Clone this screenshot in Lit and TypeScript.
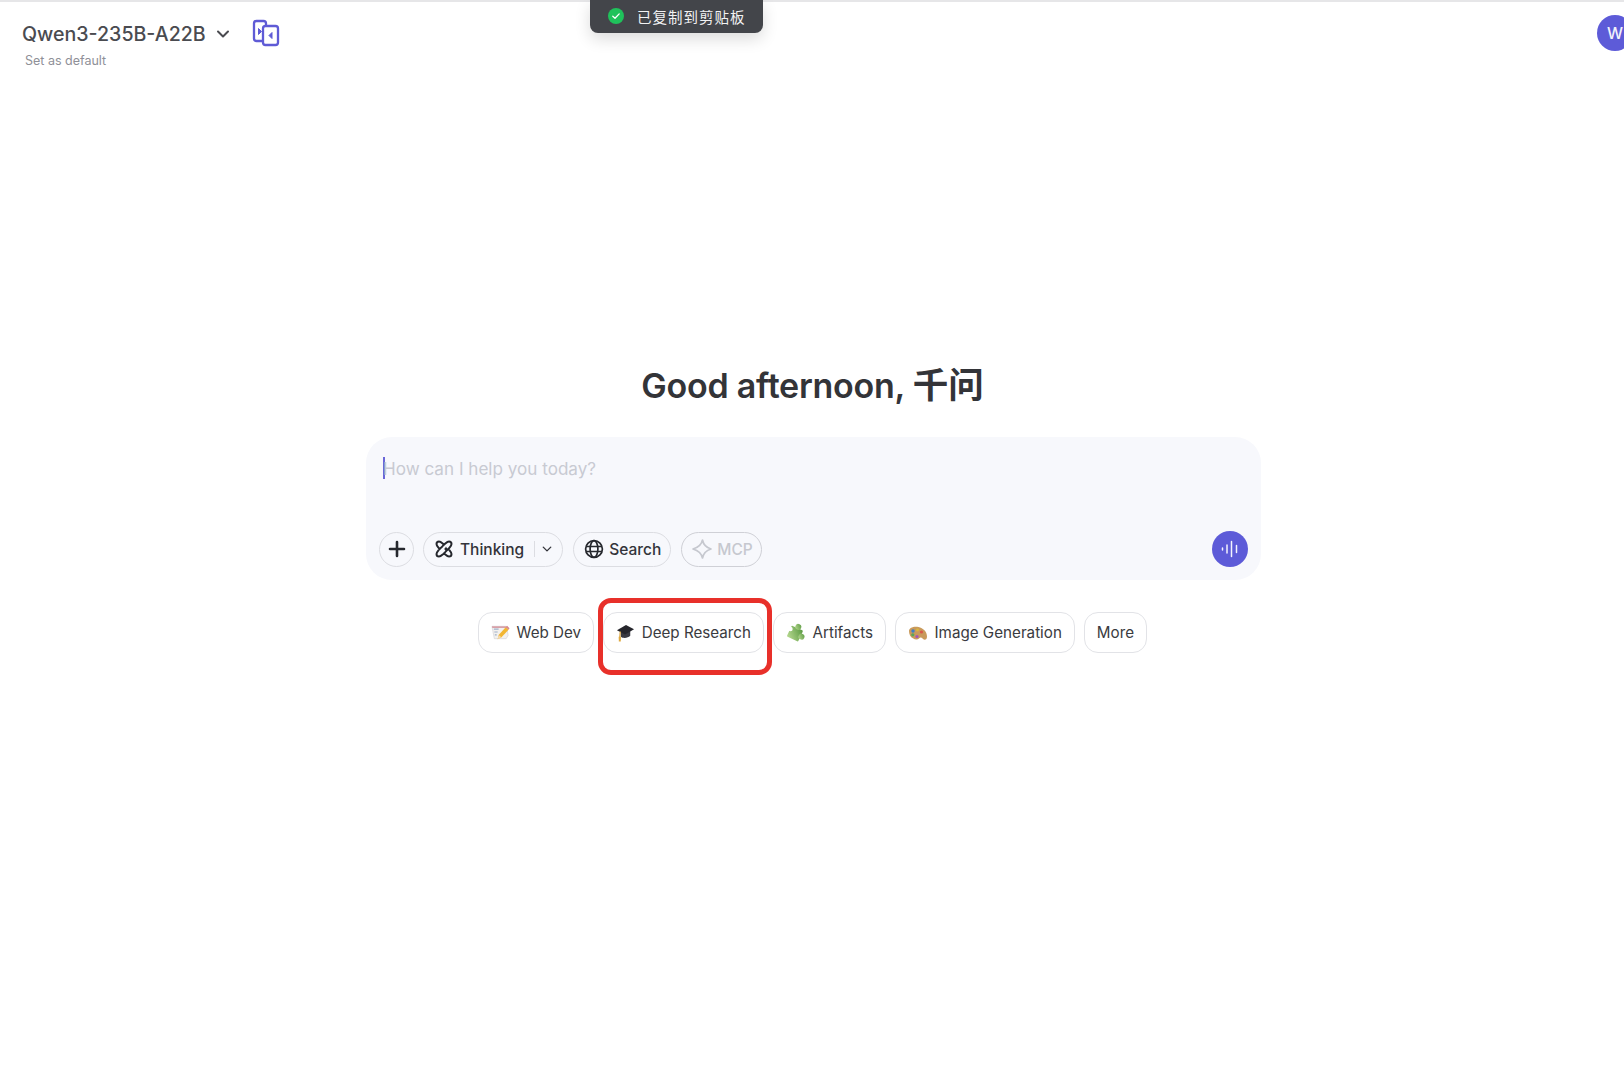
import { LitElement, html, css } from "lit";
import { customElement } from "lit/decorators.js";

const chevron = (size: number, sw: number) => html`<svg width=${size} height=${size} viewBox="0 0 16 16" fill="none" stroke="currentColor" stroke-width=${sw} stroke-linecap="round" stroke-linejoin="round"><path d="M3 5.500 8 10.500 13 5.500" /></svg>`;

const compareIcon = html`<svg width="28" height="28" viewBox="0 0 28 28" fill="none" stroke="#5f5bd6" stroke-width="2.300" stroke-linejoin="round">
  <path d="M10 22H4.500A2.500 2.500 0 0 1 2 19.500V4.500A2.500 2.500 0 0 1 4.500 2h7A2.500 2.500 0 0 1 14 4.500V7" />
  <rect x="11" y="7" width="15" height="19" rx="2.500" />
  <path d="M6.500 9.500 9.500 12.500 6.500 15.500Z" fill="#5f5bd6" stroke-width="1" />
  <path d="M20 13.500 17 16.500 20 19.500Z" fill="#5f5bd6" stroke-width="1" />
</svg>`;

const thinkingIcon = html`<svg width="20" height="20" viewBox="0 0 20 20" fill="none" stroke="#26282e" stroke-width="2" stroke-linejoin="round">
  <path d="M5 2.500C7 2.500 8.500 4.500 10 5.500C11.500 4.500 13 2.500 15 2.500C16.600 2.500 17.500 3.500 17.500 5C17.500 7 15.500 8.500 14.500 10C15.500 11.500 17.500 13 17.500 15C17.500 16.500 16.600 17.500 15 17.500C13 17.500 11.500 15.500 10 14.500C8.500 15.500 7 17.500 5 17.500C3.400 17.500 2.500 16.500 2.500 15C2.500 13 4.500 11.500 5.500 10C4.500 8.500 2.500 7 2.500 5C2.500 3.500 3.400 2.500 5 2.500Z" />
  <path d="M5.500 10C7.500 8.500 8.500 7.500 10 5.500M14.500 10C12.500 11.500 11.500 12.500 10 14.500" />
  <path d="M12 7.500 12.800 9 14 10 12.800 11 12 12.500 11.200 11 10 10 11.200 9Z" fill="#26282e" stroke="none" />
</svg>`;

const globeIcon = html`<svg width="20" height="20" viewBox="0 0 20 20" fill="none" stroke="#26282e" stroke-width="1.700">
  <circle cx="10" cy="10" r="8.400" />
  <ellipse cx="10" cy="10" rx="3.900" ry="8.400" />
  <path d="M2 7.500H18M2 12.500H18" />
</svg>`;

const sparkIcon = html`<svg width="20" height="20" viewBox="0 0 20 20" fill="none" stroke="#c6c8cf" stroke-width="1.700" stroke-linejoin="round">
  <path d="M10.500 1C11.500 6 14 8.500 19 10C14 11.500 11.500 14 10.500 19C9.500 14 6 11.500 1 10C6 8.500 9.500 6 10.500 1Z" />
</svg>`;

const memoEmoji = html`<svg width="19" height="19" viewBox="0 0 20 20">
  <path d="M1 3.500H16.500L18 13 16 16.500H3.500Z" fill="#f3f1ee" stroke="#cfcdd2" stroke-width=".6" />
  <path d="M3 6.500H8M3.500 9.500H7M4 12.500H6" stroke="#9fb0c9" stroke-width="1.200" />
  <path d="M1 3.500H16.500L16.800 5.200H1.300Z" fill="#d8a0a8" />
  <path d="M7 17 8 12.500 15.500 4.500 18.500 7 11 15Z" fill="#f2b632" />
  <path d="M15.500 4.500 17 3 19.500 5.500 18.500 7Z" fill="#d98a8a" />
  <path d="M7 17 8 12.500 11 15Z" fill="#f3d9b0" />
</svg>`;

const capEmoji = html`<svg width="19" height="19" viewBox="0 0 20 20">
  <path d="M5 8V14.500C7.500 16.500 12.500 16 15 13.500V8Z" fill="#3a3a42" />
  <path d="M1 7.500 10.500 2 19 6.500 9.500 12Z" fill="#26262c" />
  <path d="M4.500 9 4 15" stroke="#d9a441" stroke-width="1.300" />
  <path d="M2.800 14.500H5.200L5 19.500H3Z" fill="#e0a93f" />
</svg>`;

const puzzleEmoji = html`<svg width="20" height="20" viewBox="0 0 20 20">
  <defs>
    <linearGradient id="pz" x1="0" y1="1" x2="1" y2="0">
      <stop offset="0" stop-color="#b9da92" />
      <stop offset="1" stop-color="#5b9a42" />
    </linearGradient>
  </defs>
  <g fill="url(#pz)" transform="rotate(25 10 10)">
    <rect x="3" y="5" width="12.500" height="12" rx="1" />
    <circle cx="9.500" cy="3.500" r="3" />
    <circle cx="16.500" cy="11" r="3" />
  </g>
  <circle cx="4.500" cy="6" r="2.200" fill="#fff" />
</svg>`;

const paletteEmoji = html`<svg width="20" height="20" viewBox="0 0 20 20">
  <path d="M1 8C1 4.500 6 3 10.500 4C15 5 19 8.500 19 13.500C19 17 16.500 17.500 15 16C13.500 14.500 12.500 14 11 15.500C9 17.500 4 16 2 12.500C1.300 11 1 9.500 1 8Z" fill="#c99a5b" />
  <circle cx="5" cy="8" r="1.700" fill="#3f7fc4" />
  <circle cx="9.500" cy="6.800" r="1.600" fill="#d9b53f" />
  <circle cx="4.800" cy="11.800" r="1.600" fill="#5aa65a" />
  <circle cx="13.500" cy="9" r="1.600" fill="#d9574a" />
  <circle cx="9" cy="13.500" r="1.600" fill="#a455b5" />
</svg>`;

@customElement("app-root")
export class AppRoot extends LitElement {
  static styles = css`
    :host {
      display: block;
      height: 1080px;
      overflow: hidden;
      background: #fff;
      color: #26282e;
      font-family: Inter, "Noto Sans CJK SC", sans-serif;
    }

    .page {
      height: 100%;
      display: flex;
      flex-direction: column;
      border-top: 2px solid #e6e6e8;
      box-sizing: border-box;
      position: relative;
    }

    .topbar {
      display: flex;
      justify-content: space-between;
      padding: 18px 0 0 22px;
      height: 76px;
      box-sizing: border-box;
      flex: none;
    }

    .model-row {
      display: flex;
      align-items: center;
      height: 28px;
      color: #4a4b50;
    }

    .model-name {
      font-size: 19.600px;
      font-weight: 500;
      line-height: 28px;
    }

    .model-chev {
      display: flex;
      margin-left: 9px;
      color: #4a4b50;
    }

    .compare {
      display: flex;
      margin: -3px 0 0 21px;
    }

    .set-default {
      margin: 5px 0 0 3px;
      font-size: 12.500px;
      line-height: 16px;
      color: #8f9098;
    }

    .avatar {
      width: 36px;
      height: 36px;
      border-radius: 50%;
      background: #5d5bd8;
      color: #f2f2fb;
      font-size: 16px;
      font-weight: 500;
      display: flex;
      align-items: center;
      justify-content: center;
      margin: -5px -9px 0 0;
      flex: none;
    }

    .toast {
      position: absolute;
      top: -2px;
      left: 590px;
      width: 173px;
      height: 33px;
      box-sizing: border-box;
      padding: 0 0 1px 17px;
      display: flex;
      align-items: center;
      gap: 12px;
      background: #43454a;
      border-radius: 0 0 8px 8px;
      box-shadow: 0 6px 16px rgba(0, 0, 0, 0.14);
      color: #f2f2f3;
      font-size: 14.500px;
      letter-spacing: 1px;
    }

    .main {
      display: flex;
      flex-direction: column;
      align-items: center;
      padding: 0 0 0 3px;
    }

    h1 {
      margin: 280px 0 0;
      padding-right: 2px;
      font-size: 34px;
      font-weight: 600;
      line-height: 56px;
      color: #333438;
      letter-spacing: -0.25px;
    }

    h1 .cjk {
      font-size: 35.500px;
      letter-spacing: 0;
    }

    .composer {
      margin-top: 23px;
      width: 895px;
      height: 143px;
      box-sizing: border-box;
      padding: 19px 13px 13px;
      background: #f7f8fc;
      border-radius: 26px;
      display: flex;
      flex-direction: column;
      justify-content: space-between;
    }

    .prompt {
      display: flex;
      align-items: center;
      height: 24px;
      padding-left: 4px;
      font-size: 17.100px;
      color: #c8cad2;
    }

    .caret {
      width: 1.500px;
      height: 22px;
      margin-right: -1.500px;
      background: #6a67d8;
    }

    .tools {
      display: flex;
      align-items: center;
      justify-content: space-between;
    }

    .tool-group {
      display: flex;
      align-items: center;
      gap: 10px;
    }

    .pill {
      height: 35px;
      box-sizing: border-box;
      border: 1px solid #dcdde2;
      border-radius: 18px;
      display: flex;
      align-items: center;
      font-size: 15.500px;
      font-weight: 500;
      color: #33343a;
    }

    .plus {
      width: 35px;
      justify-content: center;
      margin-right: -1px;
    }

    .thinking {
      padding: 0 9px 0 10px;
      gap: 6px;
    }

    .divider {
      width: 1px;
      height: 16px;
      background: #dcdde2;
      margin: 0 0 0 4px;
    }

    .small-chev {
      display: flex;
      color: #33343a;
    }

    .search {
      padding: 0 9px 0 10px;
      gap: 5px;
    }

    .mcp {
      padding: 0 8px 0 10px;
      gap: 5px;
      color: #c6c8cf;
      border-color: #cfd0d6;
    }

    .send {
      width: 36px;
      height: 36px;
      border: 0;
      padding: 0;
      border-radius: 50%;
      background: #5d5bd8;
      display: flex;
      align-items: center;
      justify-content: center;
    }

    .chips {
      display: flex;
      gap: 9px;
      margin-top: 32px;
      padding-right: 2px;
    }

    .chip {
      position: relative;
      height: 41px;
      box-sizing: border-box;
      padding: 0 12px;
      border: 1px solid #e2e3e7;
      border-radius: 14px;
      display: flex;
      align-items: center;
      gap: 6.500px;
      font-size: 15.200px;
      color: #3a3b40;
    }

    .chip svg {
      flex: none;
    }

    .highlight {
      position: absolute;
      inset: -15px -9px -23px -6px;
      border: 5px solid #e8302a;
      border-radius: 13px;
      pointer-events: none;
    }
  `;

  render() {
    return html`
      <div class="page">
        <div class="toast">
          <svg width="18" height="18" viewBox="0 0 18 18">
            <circle cx="9" cy="9" r="8" fill="#1fc25b" />
            <path d="M5.800 9.300 8 11.300 12.200 6.900" fill="none" stroke="#fff" stroke-width="1.300" stroke-linecap="round" stroke-linejoin="round" />
          </svg>
          <span>已复制到剪贴板</span>
        </div>

        <header class="topbar">
          <div>
            <div class="model-row">
              <span class="model-name">Qwen3-235B-A22B</span>
              <span class="model-chev">${chevron(16, 2)}</span>
              <span class="compare">${compareIcon}</span>
            </div>
            <div class="set-default">Set as default</div>
          </div>
          <div class="avatar">W</div>
        </header>

        <main class="main">
          <h1>Good afternoon, <span class="cjk">千问</span></h1>

          <section class="composer">
            <div class="prompt"><span class="caret"></span>How can I help you today?</div>
            <div class="tools">
              <div class="tool-group">
                <div class="pill plus">
                  <svg width="18" height="18" viewBox="0 0 18 18" fill="none" stroke="#26282e" stroke-width="2.600" stroke-linecap="round"><path d="M9 2V16M2 9H16" /></svg>
                </div>
                <div class="pill thinking">
                  ${thinkingIcon}<span>Thinking</span><span class="divider"></span>
                  <span class="small-chev">${chevron(12, 1.800)}</span>
                </div>
                <div class="pill search">${globeIcon}<span>Search</span></div>
                <div class="pill mcp">${sparkIcon}<span>MCP</span></div>
              </div>
              <button class="send">
                <svg width="18" height="18" viewBox="0 0 18 18" fill="none" stroke="#f3f3fd" stroke-width="1.500" stroke-linecap="round">
                  <path d="M1.500 8V10M6 5V13M10.500 1.500V16.500M15.500 5.500V12.500" />
                </svg>
              </button>
            </div>
          </section>

          <div class="chips">
            <div class="chip">${memoEmoji}Web Dev</div>
            <div class="chip">${capEmoji}Deep Research<span class="highlight"></span></div>
            <div class="chip">${puzzleEmoji}Artifacts</div>
            <div class="chip">${paletteEmoji}Image Generation</div>
            <div class="chip">More</div>
          </div>
        </main>
      </div>
    `;
  }
}
